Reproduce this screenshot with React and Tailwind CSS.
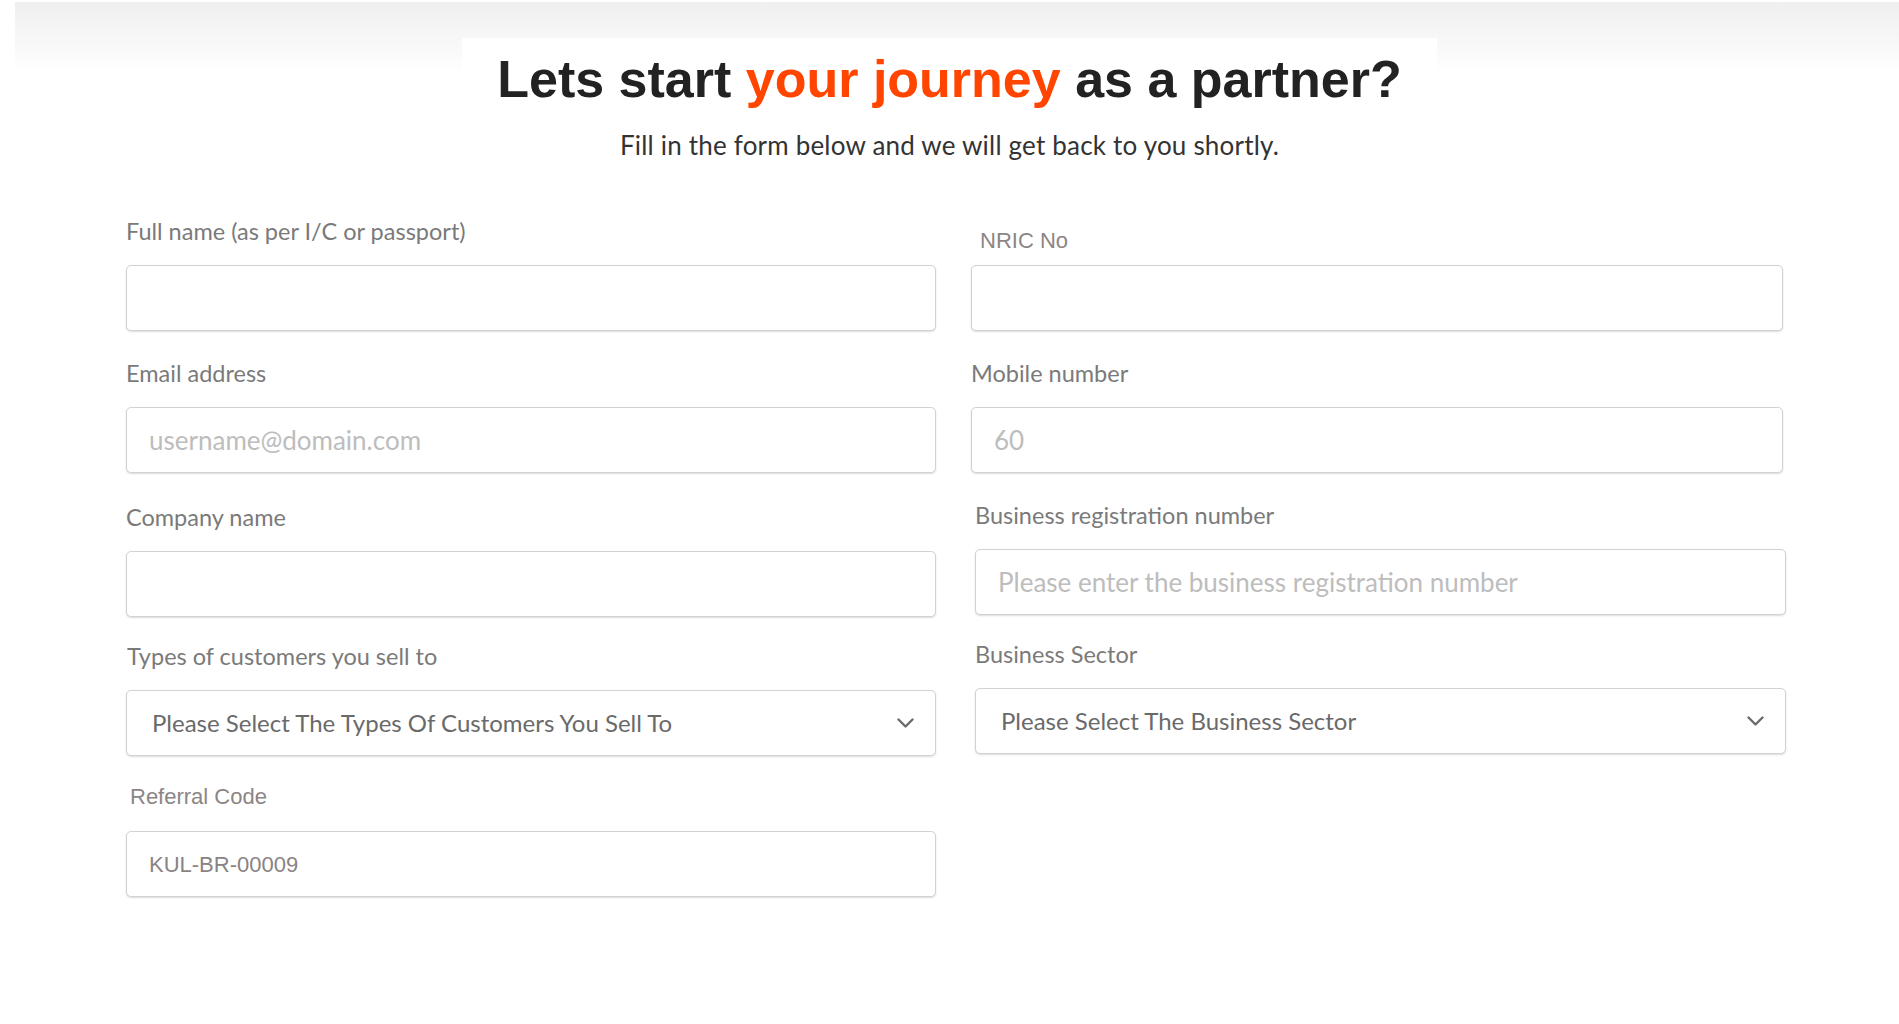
const Chevron = () => (
    <svg width="17" height="10" viewBox="0 0 17 10" fill="none" className="shrink-0">
        <polyline points="1.5,1.5 8.5,8.5 15.5,1.5" stroke="#6b6b6b" strokeWidth="2.4" strokeLinecap="round" strokeLinejoin="round" />
    </svg>
)

const box = 'h-[66px] w-full rounded-[5px] border border-[#d2d2d2] bg-white shadow-[0_1px_2px_rgba(0,0,0,0.14)] flex items-center'
const proxima = "font-['Lato','Open_Sans',sans-serif]"
const arial = "font-['Liberation_Sans',Arial,sans-serif]"

function Field({ label, labelClass = '', children }) {
    return (
        <div className="flex flex-col">
            <label className={`h-[28px] leading-[28px] mb-[20px] ${labelClass}`}>{label}</label>
            {children}
        </div>
    )
}

function TextBox({ placeholder, value, valueClass = '' }) {
    return (
        <div className={`${box} px-[22px]`}>
            {value ? (
                <span className={valueClass}>{value}</span>
            ) : (
                <span className={`${proxima} text-[26px] text-[#bdbdbd]`}>{placeholder}</span>
            )}
        </div>
    )
}

function SelectBox({ text }) {
    return (
        <div className={`${box} pl-[25px] pr-[21px] justify-between`}>
            <span className={`${proxima} text-[24px] text-[#6a6a6a]`}>{text}</span>
            <Chevron />
        </div>
    )
}

export default function App() {
    const lbl = `${proxima} text-[23.5px] text-[#7a7a7a]`
    const albl = `${arial} text-[22px] text-[#8c8585]`

    return (
        <div className="min-h-screen bg-white pb-[120px]">
            {/* faint grey band along the top, starting a little in from the left */}
            <div className="mt-[2px] bg-[linear-gradient(180deg,#efefef_0px,#ffffff_72px)] bg-no-repeat bg-[position:15px_0px] pt-[36px] flex flex-col items-center">
                <div className="bg-white px-[35px] pt-[11px]">
                    <h1 className={`${arial} font-bold text-[52px] leading-[61px] text-[#222]`}>
                        Lets start <span className="text-[#ff4500]">your journey</span> as a partner?
                    </h1>
                </div>
                <p className={`${proxima} mt-[20px] text-[26px] tracking-[0.2px] leading-[30px] text-[#333]`}>
                    Fill in the form below and we will get back to you shortly.
                </p>
            </div>

            <div className="mt-[57px] pl-[126px] grid grid-cols-[810px_812px] gap-x-[35px] gap-y-[28px]">
                <Field label="Full name (as per I/C or passport)" labelClass={lbl}>
                    <TextBox />
                </Field>
                <Field label="NRIC No" labelClass={`${albl} relative top-[10px] left-[9px]`}>
                    <TextBox />
                </Field>

                <Field label="Email address" labelClass={lbl}>
                    <TextBox placeholder="username@domain.com" />
                </Field>
                <Field label="Mobile number" labelClass={lbl}>
                    <TextBox placeholder="60" />
                </Field>

                <div className="mt-[2px] -mb-[2px]">
                    <Field label="Company name" labelClass={lbl}>
                        <TextBox />
                    </Field>
                </div>
                <div className="pl-[4px] -mr-[3px]">
                    <Field label="Business registration number" labelClass={lbl}>
                        <TextBox placeholder="Please enter the business registration number" />
                    </Field>
                </div>

                <div className="-mt-[1px]">
                    <Field label="Types of customers you sell to" labelClass={`${lbl} pl-[1px]`}>
                        <SelectBox text="Please Select The Types Of Customers You Sell To" />
                    </Field>
                </div>
                <div className="pl-[4px] -mr-[3px] -mt-[3px]">
                    <Field label="Business Sector" labelClass={lbl}>
                        <SelectBox text="Please Select The Business Sector" />
                    </Field>
                </div>

                <div className="-mt-[1px]">
                    <Field label="Referral Code" labelClass={`${albl} pl-[4px]`}>
                        <TextBox value="KUL-BR-00009" valueClass={`${arial} text-[22px] text-[#8a8383]`} />
                    </Field>
                </div>
            </div>
        </div>
    )
}
